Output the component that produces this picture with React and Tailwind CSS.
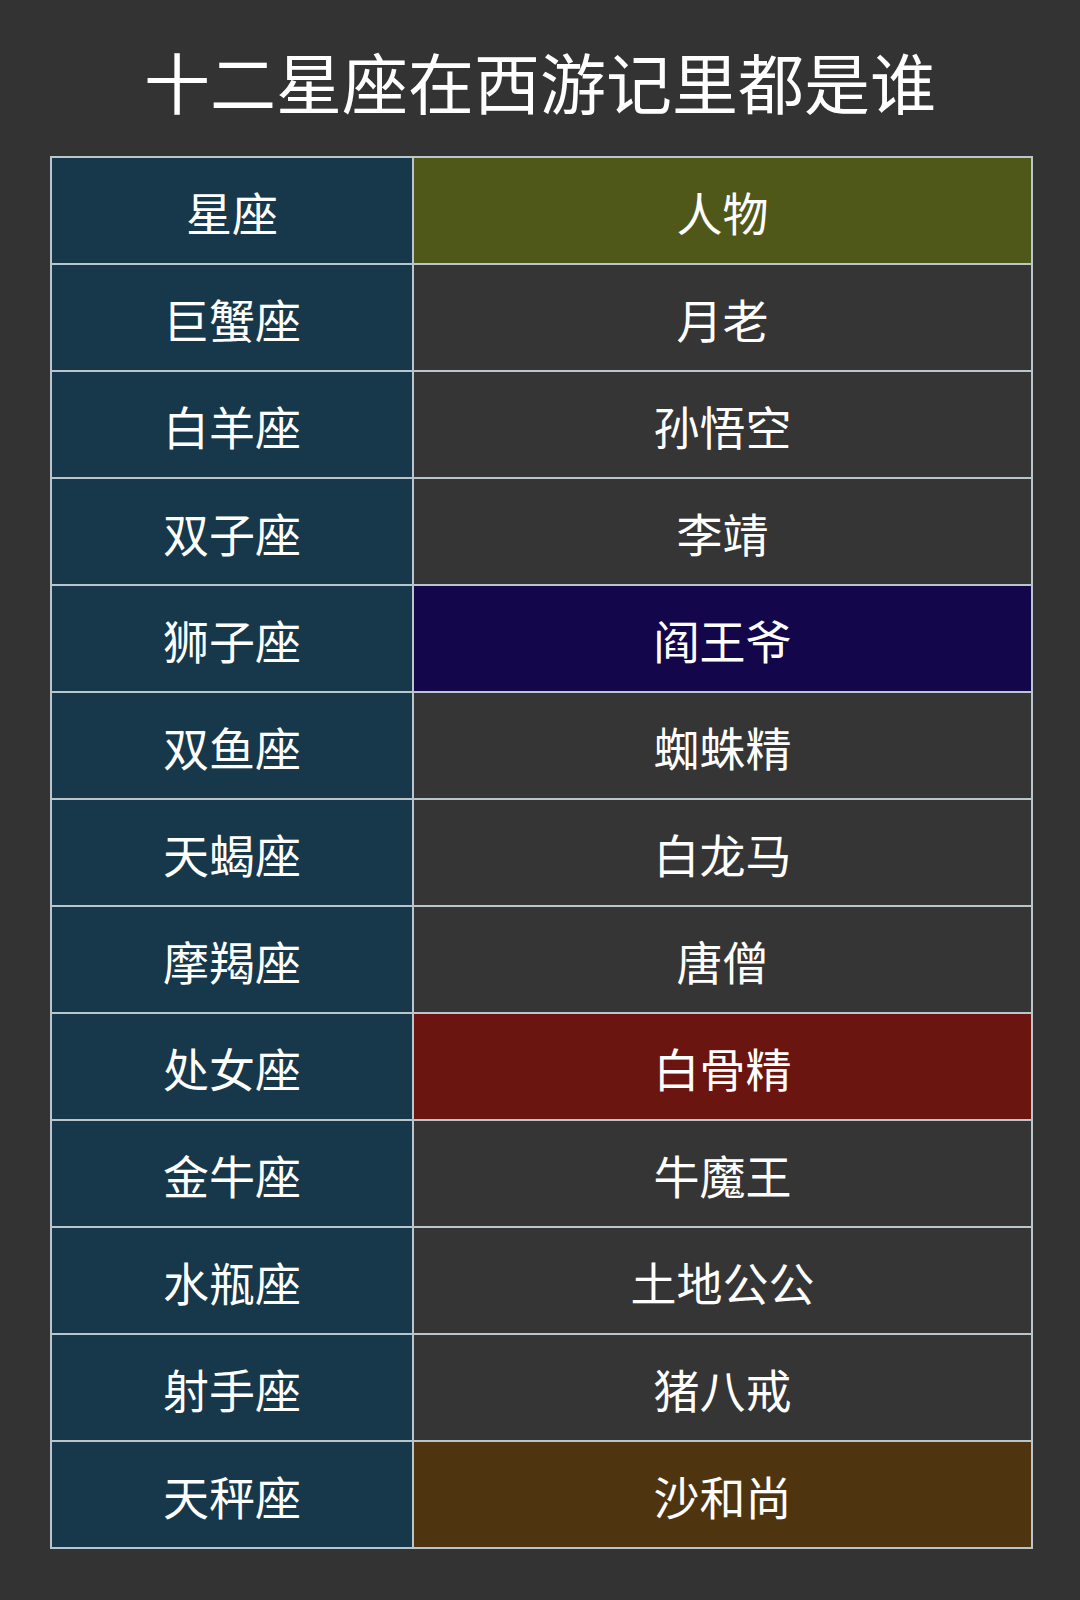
import React from "react";

const rows = [
  ["巨蟹座", "月老", ""],
  ["白羊座", "孙悟空", ""],
  ["双子座", "李靖", ""],
  ["狮子座", "阎王爷", "bg-[#14064a]"],
  ["双鱼座", "蜘蛛精", ""],
  ["天蝎座", "白龙马", ""],
  ["摩羯座", "唐僧", ""],
  ["处女座", "白骨精", "bg-[#6b1510]"],
  ["金牛座", "牛魔王", ""],
  ["水瓶座", "土地公公", ""],
  ["射手座", "猪八戒", ""],
  ["天秤座", "沙和尚", "bg-[#4f3410]"],
];

const App = () => {
  return (
    <div
      className="min-h-[1600px] w-[1080px] bg-[#333333] text-white"
      style={{ fontFamily: '"Noto Sans CJK SC", "Noto Sans", sans-serif' }}
    >
      {/* Title */}
      <div className="h-[156px] flex items-center justify-center pt-[4px]">
        <h1 className="text-[66px] leading-none">
          十二星座在西游记里都是谁
        </h1>
      </div>

      {/* Table */}
      <table className="ml-[50px] w-[983px] border-collapse text-[46px] leading-none">
        <tbody>
          <tr className="h-[107px]">
            <td className="w-[362px] border-2 border-[#b9c7cc] bg-[#16384a] text-center">
              星座
            </td>
            <td className="border-2 border-[#b9c7cc] bg-[#4f5819] text-center">
              人物
            </td>
          </tr>
          {rows.map(([sign, person, bg]) => (
            <tr key={sign} className="h-[107px]">
              <td className="w-[362px] border-2 border-[#b9c7cc] bg-[#16384a] text-center">
                {sign}
              </td>
              <td
                className={`border-2 border-[#b9c7cc] text-center ${
                  bg || "bg-[#353535]"
                }`}
              >
                {person}
              </td>
            </tr>
          ))}
        </tbody>
      </table>
    </div>
  );
};

export default App;
